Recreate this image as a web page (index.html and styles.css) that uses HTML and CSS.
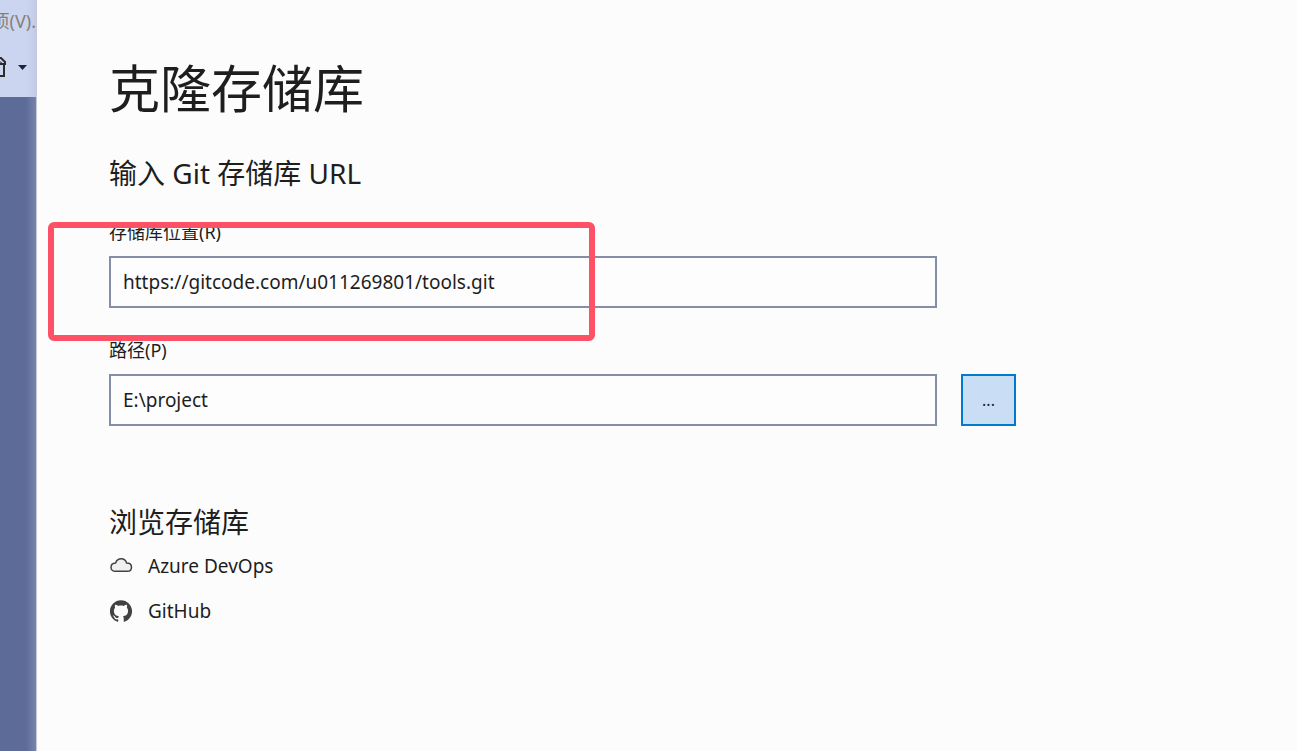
FILE: index.html
```html
<!DOCTYPE html>
<html lang="zh-CN">

<head>
    <meta charset="UTF-8">
    <meta name="viewport" content="width=device-width, initial-scale=1.0">
    <title>克隆存储库</title>
    <link rel="stylesheet" href="styles.css">
</head>

<body>
    <div class="side">
        <div class="side-top">
            <div class="menu"><span>项(V).</span></div>
            <div class="tools">
                <svg class="paste" width="12" height="24" viewBox="0 0 12 24" fill="none" stroke="#2b2b2b" stroke-width="2">
                    <path d="M4 3h3l4 4v3" />
                    <path d="M4 9h6v12H4" />
                    <path d="M4 5l5 4" stroke-width="1" />
                </svg>
                <svg width="9" height="5" viewBox="0 0 9 5">
                    <path d="M0 0h9L4.500 5z" fill="#1b2440" />
                </svg>
            </div>
        </div>
    </div>
    <main class="clone">
        <h1>克隆存储库</h1>
        <h2>输入 Git 存储库 URL</h2>
        <form class="form">
            <div class="field marked">
                <label for="url">存储库位置(R)</label>
                <input type="text" id="url" value="https://gitcode.com/u011269801/tools.git">
                <div class="mark"></div>
            </div>
            <div class="field">
                <label for="path">路径(P)</label>
                <input type="text" id="path" value="E:\project">
                <button type="button" class="browse">...</button>
            </div>
        </form>
        <h2 class="sub">浏览存储库</h2>
        <ul class="list">
            <li>
                <a href="#">
                    <svg width="24" height="24" viewBox="0 0 24 24">
                        <path d="M6.300 17.300C3.800 17.300 2 15.500 2 13.200S3.800 9 6.600 8.900C7.500 6.300 9.700 4.800 12.200 4.800c2.800 0 4.700 1.600 5.400 4.200 3 0 4.900 1.800 4.900 4.200s-1.800 4.100-4.300 4.100z" fill="#f0f0f0" stroke="#424242" stroke-width="1.500" />
                    </svg>
                    <span>Azure DevOps</span>
                </a>
            </li>
            <li>
                <a href="#">
                    <svg width="24" height="24" viewBox="-1 -1 26 26">
                        <path fill="#424242" d="M12 .297c-6.630 0-12 5.373-12 12 0 5.303 3.438 9.800 8.205 11.385.6.113.82-.258.82-.577 0-.285-.01-1.040-.015-2.040-3.338.724-4.042-1.610-4.042-1.610C4.422 18.070 3.633 17.700 3.633 17.700c-1.087-.744.084-.729.084-.729 1.205.084 1.838 1.236 1.838 1.236 1.070 1.835 2.809 1.305 3.495.998.108-.776.417-1.305.76-1.605-2.665-.3-5.466-1.332-5.466-5.930 0-1.310.465-2.380 1.235-3.220-.135-.303-.54-1.523.105-3.176 0 0 1.005-.322 3.300 1.230.96-.267 1.980-.399 3-.405 1.020.006 2.040.138 3 .405 2.280-1.552 3.285-1.230 3.285-1.230.645 1.653.24 2.873.12 3.176.765.840 1.230 1.910 1.230 3.220 0 4.610-2.805 5.625-5.475 5.920.42.360.81 1.096.81 2.220 0 1.606-.015 2.896-.015 3.286 0 .315.21.690.825.570C20.565 22.092 24 17.592 24 12.297c0-6.627-5.373-12-12-12" />
                    </svg>
                    <span>GitHub</span>
                </a>
            </li>
        </ul>
    </main>
</body>

</html>
```
FILE: styles.css
```css
* {
    margin: 0;
    padding: 0;
    box-sizing: border-box;
}

body {
    display: flex;
    min-height: 100vh;
    background-color: #fcfcfc;
    color: #1e1e1e;
    font-family: "Noto Sans", "Noto Sans CJK SC", sans-serif;
    font-size: 18px;
}

.side {
    width: 37px;
    flex-shrink: 0;
    overflow: hidden;
    background: linear-gradient(to left, #7883ab, #5d6b99 10px);
    border-right: 1px solid #c4c8d8;
}

.side-top {
    height: 97px;
    background: linear-gradient(to left, #c3cbe6, #ccd5f0 10px);
}

.menu {
    display: flex;
    justify-content: flex-end;
    padding-top: 7px;
    line-height: 28px;
    color: #85807c;
    white-space: nowrap;
}

.tools {
    display: flex;
    align-items: center;
    gap: 12px;
    padding-top: 20px;
}

.paste {
    margin-left: -6px;
}

.clone {
    flex: 1;
    padding: 48px 72px;
}

h1 {
    font-size: 51px;
    font-weight: 400;
    line-height: 80px;
}

h2 {
    margin-top: 24px;
    font-size: 28px;
    font-weight: 400;
    line-height: 42px;
}

.form {
    max-width: 907px;
    margin-top: 24px;
}

.field {
    display: grid;
    grid-template-columns: 1fr 55px;
    column-gap: 24px;
    row-gap: 10px;
    margin-bottom: 28px;
}

.marked {
    position: relative;
}

/* red frame over the url box */
.mark {
    position: absolute;
    top: 4px;
    left: -61px;
    width: 547px;
    height: 119px;
    border: 6px solid #ff5166;
    border-radius: 6px;
    pointer-events: none;
}

label {
    grid-column: 1 / 3;
    line-height: 28px;
}

input {
    width: 100%;
    height: 52px;
    padding: 0 12px;
    border: 2px solid #848fa5;
    background-color: #fdfdfd;
    color: #1e1e1e;
    font-family: inherit;
    font-size: 19px;
}

.browse {
    border: 2px solid #007acc;
    background-color: #c9def5;
    color: #1e1e1e;
    font-family: inherit;
    font-size: 16px;
}

.sub {
    margin-top: 75px;
}

.list {
    list-style: none;
}

.list a {
    display: flex;
    align-items: center;
    gap: 15px;
    height: 45px;
    color: #1e1e1e;
    font-size: 19px;
    text-decoration: none;
}
```
